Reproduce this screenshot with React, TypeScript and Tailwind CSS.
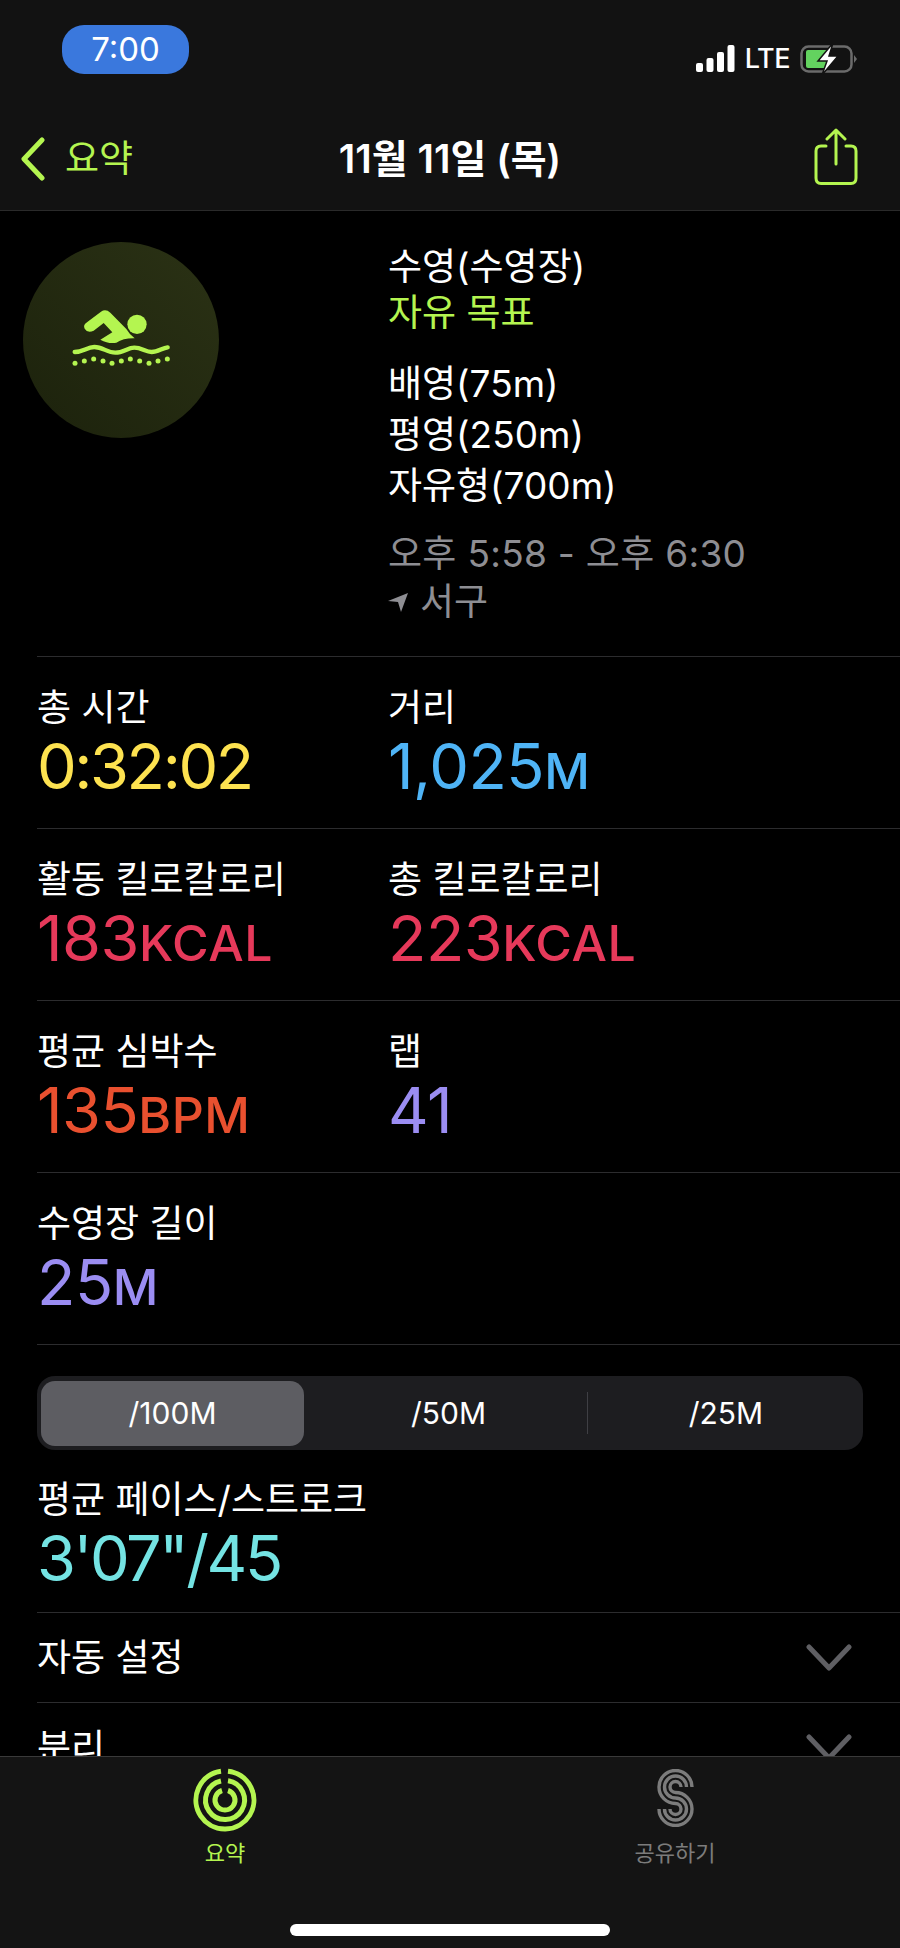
const fontStack = { fontFamily: 'Inter, "Noto Sans CJK KR", sans-serif' };

type StatProps = { label: string; value: string; unit?: string; color: string; tight?: boolean };

function Stat({ label, value, unit, color, tight }: StatProps) {
  return (
    <div>
      <div className="h-[46px] text-[37px] leading-[48px] text-white">{label}</div>
      <div className={`h-[72px] text-[63px] leading-[72px] ${tight ? "tracking-[-2.4px]" : "tracking-[-0.5px]"} ${color}`}>
        {value}
        {unit && <span className="text-[50px] font-medium tracking-[0.5px]">{unit}</span>}
      </div>
    </div>
  );
}

function StatRow({ children }: { children: React.ReactNode }) {
  return (
    <div className="ml-[37px] grid h-[172px] grid-cols-[351px_1fr] border-t border-[#2c2c2e] pt-[27px]">
      {children}
    </div>
  );
}

function SwimIcon() {
  return (
    <svg width="196" height="196" viewBox="70 67 588 588" className="shrink-0">
      <defs>
        <linearGradient id="swimBg" x1="1" y1="0" x2="0" y2="1">
          <stop offset="0" stopColor="#2b3215" />
          <stop offset="1" stopColor="#1c220c" />
        </linearGradient>
      </defs>
      <circle cx="364" cy="361" r="294" fill="url(#swimBg)" />
      <circle cx="412" cy="314" r="29" fill="#b4f550" />
      <path
        d="M263 307 L304 276 Q318 266 332 279 L380 328 Q390 345 405 356 Q372 355 350 369 Q328 374 302 360 L338 338 L312 310 L282 333 Q264 342 255 327 Q249 315 263 307 Z"
        fill="#b4f550"
      />
      <path
        d="M225 397 C250 397 262 382 284 382 C310 382 322 399 347 399 C372 399 384 384 404 384 C426 384 438 397 456 397 C474 397 488 385 504 383"
        fill="none"
        stroke="#b4f550"
        strokeWidth="13"
        strokeLinecap="round"
      />
      {[
        [226, 431],
        [254, 424],
        [282, 418],
        [310, 424],
        [337, 431],
        [365, 424],
        [392, 418],
        [420, 424],
        [448, 431],
        [475, 424],
        [503, 418],
      ].map(([x, y]) => (
        <circle key={x} cx={x} cy={y} r="7.5" fill="#b4f550" />
      ))}
    </svg>
  );
}

function RingsIcon() {
  return (
    <svg width="66" height="66" viewBox="0 0 66 66" fill="none" stroke="#b4f550" strokeWidth="5">
      <path d="M36 4.2 A29 29 0 1 1 29 4.3" />
      <path d="M36 13.800 A19.500 19.500 0 1 1 29 14" />
      <path d="M36 23.500 A10 10 0 1 1 30 23.500" />
    </svg>
  );
}

function ShareRingsIcon() {
  const paths = [16.5, 11, 5.5].map((r) => {
    const r2 = 22 - r;
    return `M${18.5 + r} 18 A${r} ${r} 0 1 0 18.5 ${18 + r} A${r2} ${r2} 0 1 1 ${18.5 - r2} 40`;
  });
  return (
    <svg width="37" height="58" viewBox="0 0 37 58" fill="none" stroke="#7c7c7c" strokeWidth="3.4">
      {paths.map((d) => (
        <path key={d} d={d} />
      ))}
    </svg>
  );
}

function Chevron() {
  return (
    <svg width="46" height="28" viewBox="0 0 46 28" fill="none" stroke="#5f5f63" strokeWidth="5" strokeLinecap="round" strokeLinejoin="round" className="shrink-0">
      <path d="M3 3 L23 24 L43 3" />
    </svg>
  );
}

export default function App() {
  return (
    <div className="flex h-[1948px] w-[900px] flex-col overflow-hidden bg-black text-white" style={fontStack}>
      {/* status + nav */}
      <header className="h-[211px] shrink-0 border-b border-[#2a2a2a] bg-[#121212]">
        <div className="flex h-[108px] items-start justify-between pl-[62px] pr-[42px] pt-[25px]">
          <div className="flex h-[49px] w-[127px] items-center justify-center rounded-[22px] bg-[#3a78dd] text-[33px]">7:00</div>
          <div className="mt-[18px] flex items-center">
            <svg width="40" height="28" viewBox="0 0 40 28" fill="#fff" className="mr-[-2px]">
              <rect x="0" y="18" width="7" height="9" rx="2" />
              <rect x="10.5" y="13" width="7" height="14" rx="2" />
              <rect x="21" y="7" width="7" height="20" rx="2" />
              <rect x="31.5" y="0" width="7" height="27" rx="2" />
            </svg>
            <span className="ml-[11px] text-[27px] font-medium leading-[28px] tracking-[-0.5px]">LTE</span>
            <svg width="58" height="32" viewBox="0 0 58 32" className="ml-[10px]">
              <rect x="1.5" y="3.5" width="50" height="25" rx="7" fill="none" stroke="#6b6b6b" strokeWidth="2.5" />
              <path d="M6 9 Q6 7 8 7 H29 V25 H8 Q6 25 6 23 Z" fill="#63d25f" />
              <path d="M54 12 L57 16 L54 20 Z" fill="#6b6b6b" />
              <path d="M33 0 L18 18 H27 L22 32 L38 13 H29 Z" fill="#fff" stroke="#121212" strokeWidth="1.5" />
            </svg>
          </div>
        </div>
        <div className="grid h-[102px] grid-cols-[1fr_auto_1fr] items-center px-[21px]">
          <div className="flex items-center">
            <svg width="24" height="44" viewBox="0 0 24 44" fill="none" stroke="#b4f550" strokeWidth="5" strokeLinecap="round" strokeLinejoin="round">
              <path d="M21 3 L3 22 L21 41" />
            </svg>
            <span className="ml-[20px] text-[37px] text-[#b4f550]">요약</span>
          </div>
          <div className="text-[39px] font-semibold">11월 11일 (목)</div>
          <div className="-mt-[4px] flex justify-end pr-[21px]">
            <svg width="44" height="58" viewBox="0 0 44 58" fill="none" stroke="#b4f550" strokeWidth="3" strokeLinecap="round" strokeLinejoin="round">
              <path d="M12 18 H7 Q2 18 2 23 V50 Q2 55.500 7 55.500 H37 Q42 55.500 42 50 V23 Q42 18 37 18 H32" />
              <path d="M22 36 V2 M13 11 L22 2 L31 11" />
            </svg>
          </div>
        </div>
      </header>

      <main className="min-h-0 flex-1 overflow-hidden">
        {/* workout summary */}
        <section className="flex h-[445px] pl-[23px] pt-[31px]">
          <SwimIcon />
          <div className="ml-[169px] text-[37px] leading-[50px]">
            <div>수영(수영장)</div>
            <div className="-mt-[4px] text-[#b4f550]">자유 목표</div>
            <div className="mt-[21px]">배영(75m)</div>
            <div className="mt-[1px]">평영(250m)</div>
            <div className="mt-[1px]">자유형(700m)</div>
            <div className="mt-[18px] tracking-[0.3px] text-[#8e8e93]">오후 5:58 - 오후 6:30</div>
            <div className="-mt-[2px] flex items-center text-[#8e8e93]">
              <svg width="20" height="20" viewBox="0 0 20 20" fill="#8e8e93" className="mr-[12px]">
                <path d="M20 1 L13 20 L10 10 L0 9 Z" />
              </svg>
              서구
            </div>
          </div>
        </section>

        <StatRow>
          <Stat label="총 시간" value="0:32:02" color="text-[#fde250]" tight />
          <Stat label="거리" value="1,025" unit="M" color="text-[#4fb4f6]" />
        </StatRow>
        <StatRow>
          <Stat label="활동 킬로칼로리" value="183" unit="KCAL" color="text-[#e6395a]" />
          <Stat label="총 킬로칼로리" value="223" unit="KCAL" color="text-[#e6395a]" />
        </StatRow>
        <StatRow>
          <Stat label="평균 심박수" value="135" unit="BPM" color="text-[#e9502f]" />
          <Stat label="랩" value="41" color="text-[#9b8df2]" />
        </StatRow>
        <StatRow>
          <Stat label="수영장 길이" value="25" unit="M" color="text-[#9b8df2]" />
          <div />
        </StatRow>

        {/* pace */}
        <section className="ml-[37px] h-[268px] border-t border-[#2c2c2e] pt-[31px]">
          <div className="flex h-[74px] w-[826px] items-center rounded-[18px] bg-[#1d1d20] px-[4px] text-[30px]">
            <div className="flex h-[65px] w-[263px] items-center justify-center rounded-[14px] bg-[#5d5d62]">/100M</div>
            <div className="flex h-[42px] w-[284px] items-center justify-center border-r border-[#3f3f44] pl-[6px]">/50M</div>
            <div className="flex flex-1 items-center justify-center pl-[5px]">/25M</div>
          </div>
          <div className="mt-[26px]">
            <Stat label="평균 페이스/스트로크" value={`3'07"/45`} color="text-[#74e3e3]" tight />
          </div>
        </section>

        <div className="ml-[37px] flex h-[90px] items-center justify-between border-t border-[#2c2c2e] pr-[48px]">
          <span className="text-[37px]">자동 설정</span>
          <Chevron />
        </div>
        <div className="ml-[37px] flex h-[90px] items-center justify-between border-t border-[#2c2c2e] pr-[48px]">
          <span className="text-[37px]">분리</span>
          <Chevron />
        </div>
      </main>

      {/* tab bar */}
      <nav className="h-[192px] shrink-0 border-t border-[#3a3a3a] bg-[#141414] pt-[10px]">
        <div className="grid grid-cols-2">
          <div className="flex flex-col items-center">
            <RingsIcon />
            <span className="mt-[4px] text-[22px] leading-[32px] text-[#b4f550]">요약</span>
          </div>
          <div className="flex flex-col items-center">
            <div className="mt-[2px] h-[64px]">
              <ShareRingsIcon />
            </div>
            <span className="mt-[4px] text-[22px] leading-[32px] text-[#7c7c7c]">공유하기</span>
          </div>
        </div>
        <div className="mx-auto mt-[55px] h-[12px] w-[320px] rounded-full bg-white" />
      </nav>
    </div>
  );
}
